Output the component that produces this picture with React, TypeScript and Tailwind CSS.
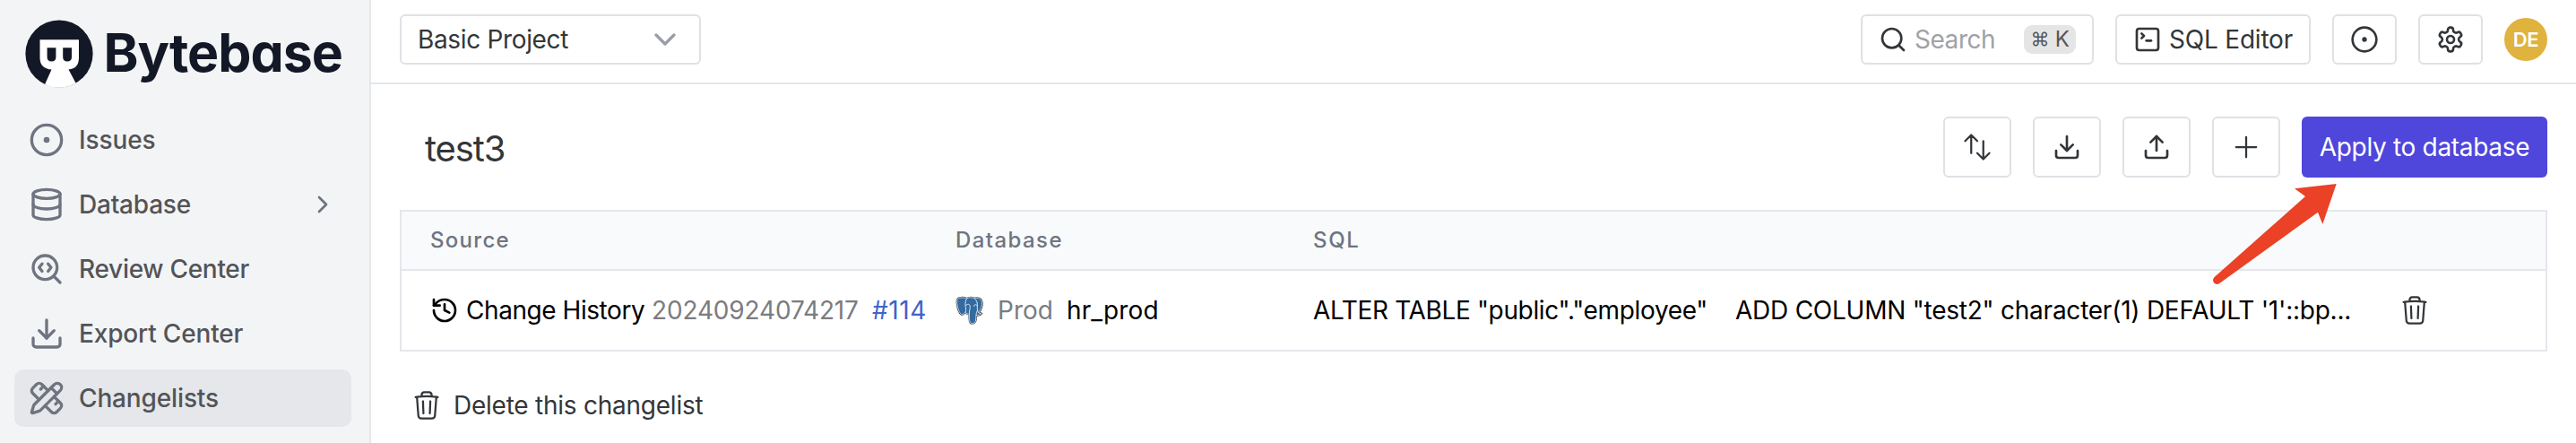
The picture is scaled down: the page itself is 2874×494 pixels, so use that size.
import type { ReactNode } from "react";
import {
  ChevronDown,
  ChevronRight,
  CircleDot,
  Database,
  Download,
  History,
  PencilRuler,
  Search,
  SearchCode,
  SquareTerminal,
  Upload,
} from "lucide-react";
import { HiOutlineArrowsUpDown, HiOutlinePlus, HiOutlineTrash } from "react-icons/hi2";

function LogoMark() {
  return (
    <svg viewBox="0 0 76 76" className="size-[76px] shrink-0">
      <circle cx="38" cy="38" r="37.6" fill="#131826" />
      <path
        d="M16.5 22.2H60V42.5Q60 54.5 48.5 55.4L56.6 70.8A37.6 37.6 0 0 1 22 72.2L29.5 55.6Q16.5 54.5 16.5 42.5Z"
        fill="#fff"
      />
      <path d="M24.6 31.2H34.4V41.5Q34.4 46.6 29.5 46.6Q24.6 46.6 24.6 41.5Z" fill="#131826" />
      <path d="M42.2 31.2H52V41.5Q52 46.6 47.1 46.6Q42.2 46.6 42.2 41.5Z" fill="#131826" />
    </svg>
  );
}

function GearIcon() {
  return (
    <svg viewBox="0 0 24 24" className="size-8" fill="none" stroke="currentColor" strokeWidth="2" strokeLinecap="round" strokeLinejoin="round">
      <path d="M12.22 2h-.44a2 2 0 0 0-2 2v.18a2 2 0 0 1-1 1.73l-.43.25a2 2 0 0 1-2 0l-.15-.08a2 2 0 0 0-2.73.73l-.22.38a2 2 0 0 0 .73 2.73l.15.1a2 2 0 0 1 1 1.72v.51a2 2 0 0 1-1 1.74l-.15.09a2 2 0 0 0-.73 2.73l.22.38a2 2 0 0 0 2.73.73l.15-.08a2 2 0 0 1 2 0l.43.25a2 2 0 0 1 1 1.73V20a2 2 0 0 0 2 2h.44a2 2 0 0 0 2-2v-.18a2 2 0 0 1 1-1.73l.43-.25a2 2 0 0 1 2 0l.15.08a2 2 0 0 0 2.73-.73l.22-.39a2 2 0 0 0-.73-2.73l-.15-.08a2 2 0 0 1-1-1.74v-.5a2 2 0 0 1 1-1.74l.15-.09a2 2 0 0 0 .73-2.73l-.22-.38a2 2 0 0 0-2.73-.73l-.15.08a2 2 0 0 1-2 0l-.43-.25a2 2 0 0 1-1-1.73V4a2 2 0 0 0-2-2z" />
      <circle cx="12" cy="12" r="3" />
    </svg>
  );
}

function PostgresIcon() {
  const outline =
    "M46 33C36 33 32 40 34 53C36 68 41 86 49 90C54 92 58 87 62 84C66 88 72 88 76 89C77 98 74 112 79 118C84 123 95 121 97 113C99 106 98 100 99 93C106 94 115 91 118 87C114 87 111 87 108 85C115 75 121 58 119 47C117 36 104 31 94 35C84 31 74 31 67 36C60 33 52 32 46 33Z";
  return (
    <svg viewBox="29 27 94 98" className="h-8 w-[31px] shrink-0">
      <path d={outline} fill="#33679a" stroke="#1f2933" strokeWidth="6" strokeLinejoin="round" />
      <path d={outline} fill="#336a9f" stroke="#dfe8f0" strokeWidth="2.6" strokeLinejoin="round" />
      <path
        d="M67 37C60 46 62 60 64 70C65 77 63 82 62 84M94 36C101 42 105 52 103 64C102 72 104 80 108 85M64 60C68 54 76 54 78 60C80 70 74 80 76 89M103 60C98 54 92 56 92 62M99 93C99 84 102 80 104 76"
        fill="none"
        stroke="#dfe8f0"
        strokeWidth="3"
        strokeLinecap="round"
      />
    </svg>
  );
}

function NavItem({ icon, active, trailing, children }: { icon: ReactNode; active?: boolean; trailing?: ReactNode; children: ReactNode }) {
  return (
    <a
      className={
        active
          ? "flex h-16 items-center gap-4 rounded-[10px] bg-[#e5e7eb] px-4"
          : "flex h-16 items-center gap-4 rounded-[10px] px-4"
      }
    >
      <span className="text-[#6f7480]">{icon}</span>
      <span className="flex-1 text-[28px] font-medium text-[#535457]">{children}</span>
      {trailing}
    </a>
  );
}

function Sidebar() {
  return (
    <aside className="flex w-[414px] shrink-0 flex-col border-r-2 border-[#e5e7eb] bg-[#f3f4f6]">
      <div className="flex h-[124px] items-start gap-3 pt-[22px] pl-[27.5px]">
        <LogoMark />
        <span className="mt-[-1px] text-[59px] leading-[76px] font-bold tracking-[-1px] text-[#131826] [font-feature-settings:'cv11']">
          Bytebase
        </span>
      </div>
      <nav className="flex flex-col gap-2 pr-5 pl-4">
        <NavItem icon={<CircleDot className="size-10" />}>
          <span className="tracking-[-0.12px]">Issues</span>
        </NavItem>
        <NavItem icon={<Database className="size-10" />} trailing={<ChevronRight className="size-8 text-[#6b7280]" />}>
          <span className="tracking-[-0.22px]">Database</span>
        </NavItem>
        <NavItem icon={<SearchCode className="size-10" />}>
          <span className="tracking-[-0.29px]">Review Center</span>
        </NavItem>
        <NavItem icon={<Download className="size-10" />}>
          <span className="tracking-[-0.17px]">Export Center</span>
        </NavItem>
        <NavItem active icon={<PencilRuler className="size-10" />}>
          <span className="tracking-[-0.14px]">Changelists</span>
        </NavItem>
      </nav>
    </aside>
  );
}

function TopBar() {
  return (
    <header className="flex h-[94px] items-start justify-between border-b-2 border-[#e5e7eb] pt-4 pr-8 pl-8">
      <button className="flex h-14 w-[336px] items-center justify-between rounded-md border-2 border-[#e0e0e6] px-[18px]">
        <span className="text-[28px] tracking-[-0.34px]">Basic Project</span>
        <ChevronDown className="size-10 text-[#9b9ea6]" />
      </button>
      <div className="flex h-14 items-center gap-6">
        <button className="flex h-14 w-[260px] items-center rounded-md border-2 border-[#e0e0e6] px-[18px]">
          <Search className="size-8" />
          <span className="ml-2 flex-1 text-left text-[28px] tracking-[-0.47px] text-[#a0a2a6]">Search</span>
          <kbd className="flex h-8 w-[58px] items-center justify-center rounded-[9px] bg-[#e5e5e6] font-[Inter,sans-serif] text-2xl tracking-[-0.3px] whitespace-pre text-[#55575a]">
            <span className="text-[21px]">⌘</span> K
          </kbd>
        </button>
        <button className="flex h-14 w-[218px] items-center rounded-md border-2 border-[#e0e0e6] pl-[18px]">
          <SquareTerminal className="size-8" />
          <span className="ml-2 text-[28px] tracking-[-0.2px]">SQL Editor</span>
        </button>
        <button className="flex h-14 w-[72px] items-center justify-center rounded-md border-2 border-[#e0e0e6]">
          <CircleDot className="size-8" />
        </button>
        <button className="flex h-14 w-[72px] items-center justify-center rounded-md border-2 border-[#e0e0e6]">
          <GearIcon />
        </button>
        <span className="flex size-12 items-center justify-center rounded-full bg-[#e0b23e] text-[22px] font-semibold tracking-[-0.3px] text-white">DE</span>
      </div>
    </header>
  );
}

function IconButton({ children }: { children: ReactNode }) {
  return <button className="flex h-[68px] w-[76px] items-center justify-center rounded-md border-2 border-[#e0e0e6]">{children}</button>;
}

function Toolbar() {
  return (
    <div className="flex items-center justify-between">
      <h1 className="pt-[3px] pl-7 text-[40px] tracking-[-1.1px]">test3</h1>
      <div className="flex gap-6">
        <IconButton>
          <HiOutlineArrowsUpDown className="size-9" />
        </IconButton>
        <IconButton>
          <Download className="size-8" />
        </IconButton>
        <IconButton>
          <Upload className="size-8" />
        </IconButton>
        <IconButton>
          <HiOutlinePlus className="size-9" />
        </IconButton>
        <button className="flex h-[68px] w-[274px] items-center justify-center rounded-md bg-[#4f46dc] text-[28px] tracking-[-0.31px] text-white">
          Apply to database
        </button>
      </div>
    </div>
  );
}

function ChangeTable() {
  return (
    <div className="mt-9 border-2 border-[#e5e7eb]">
      <div className="grid h-[66px] grid-cols-[618px_399px_1fr_166px] items-center border-b-2 border-[#e5e7eb] bg-[#f9fafb] text-2xl font-medium text-[#6f7480]">
        <span className="pl-8 tracking-[1.28px]">Source</span>
        <span className="tracking-[1.42px]">Database</span>
        <span className="tracking-[1.7px]">SQL</span>
        <span />
      </div>
      <div className="grid h-[88px] grid-cols-[618px_399px_1fr_166px] items-center text-[28px] whitespace-pre text-black">
        <div className="flex items-center pl-8">
          <History className="size-8" />
          <span className="ml-2 w-[207px] tracking-[-0.44px]">Change History</span>
          <span className="w-[246px] tracking-[-0.16px] text-[#7b7c80]">20240924074217</span>
          <a className="tracking-[0.6px] text-[#3f63cb]">#114</a>
        </div>
        <div className="flex items-center">
          <PostgresIcon />
          <span className="ml-4 w-[77px] text-[#7b7c80]">Prod</span>
          <span className="tracking-[0.1px]">hr_prod</span>
        </div>
        <div className="flex items-center">
          <span className="w-[471px] tracking-[-0.35px]">ALTER TABLE "public"."employee"</span>
          <span className="tracking-[-0.24px]">ADD COLUMN "test2" character(1) DEFAULT '1'::bp...</span>
        </div>
        <HiOutlineTrash className="ml-0.5 size-9 text-[#333639]" />
      </div>
    </div>
  );
}

function PointerArrow() {
  return (
    <svg viewBox="0 0 156 124" className="pointer-events-none absolute top-[200px] left-[2460px] h-[124px] w-[156px]">
      <path d="M146.7 5L100 10.3L112 19L10.6 109A4.4 4.4 0 0 0 16.6 115.8L126 36.7L131.3 50Z" fill="#ea4127" />
    </svg>
  );
}

export default function App() {
  return (
    <div className="relative flex h-[494px] w-[2874px] overflow-hidden bg-white font-[Inter,sans-serif] text-[#333639]">
      <Sidebar />
      <div className="flex flex-1 flex-col">
        <TopBar />
        <main className="px-8 pt-9">
          <Toolbar />
          <ChangeTable />
          <button className="mt-10 ml-3 flex items-center gap-3 text-[28px] leading-10 tracking-[-0.24px]">
            <HiOutlineTrash className="size-9" />
            Delete this changelist
          </button>
        </main>
      </div>
      <PointerArrow />
    </div>
  );
}
